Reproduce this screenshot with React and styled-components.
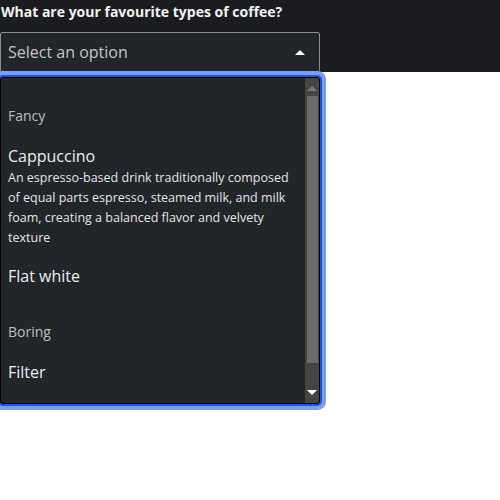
import React from 'react';
import styled, { createGlobalStyle } from 'styled-components';

const GlobalStyle = createGlobalStyle`
  html, body {
    margin: 0;
    padding: 0;
    background: #ffffff;
  }
  body {
    font-family: "Open Sans", "Noto Sans", sans-serif;
  }
  #root {
    min-height: 100vh;
  }
`;

const groups = [
  {
    label: 'Fancy',
    options: [
      {
        title: 'Cappuccino',
        description:
          'An espresso-based drink traditionally composed of equal parts espresso, steamed milk, and milk foam, creating a balanced flavor and velvety texture',
      },
      { title: 'Flat white' },
    ],
  },
  {
    label: 'Boring',
    options: [{ title: 'Filter' }],
  },
];

const App = () => {
  return (
    <Page>
      <GlobalStyle />
      <Header>
        <Label>What are your favourite types of coffee?</Label>
        <Field>
          <Trigger>
            <Placeholder>Select an option</Placeholder>
            <Caret />
          </Trigger>
          <Listbox>
            <Options>
              {groups.map(group => (
                <React.Fragment key={group.label}>
                  <GroupLabel>{group.label}</GroupLabel>
                  {group.options.map(option => (
                    <Option key={option.title}>
                      <OptionTitle>{option.title}</OptionTitle>
                      {option.description && (
                        <OptionText>{option.description}</OptionText>
                      )}
                    </Option>
                  ))}
                </React.Fragment>
              ))}
            </Options>
            <Scrollbar>
              <ScrollArrow $dim />
              <Thumb />
              <ScrollArrow $down />
            </Scrollbar>
          </Listbox>
        </Field>
      </Header>
    </Page>
  );
};

const Page = styled.div`
  min-height: 500px;
  background: #ffffff;
`;

const Header = styled.div`
  background: #1b1c1f;
  display: flex;
  flex-direction: column;
  gap: 8px;
`;

const Label = styled.div`
  color: #f2f2f2;
  font-size: 14px;
  font-weight: 700;
  line-height: 24px;
  padding-left: 1px;
`;

const Field = styled.div`
  position: relative;
  width: 320px;
`;

const Trigger = styled.div`
  box-sizing: border-box;
  height: 40px;
  display: flex;
  align-items: center;
  justify-content: space-between;
  padding: 0 14px 0 7px;
  background: #222529;
  border: 1px solid #8c8d90;
  border-radius: 2px;
`;

const Placeholder = styled.span`
  color: #c4c4c4;
  font-size: 16px;
`;

const Caret = styled.span`
  width: 0;
  height: 0;
  border-left: 5px solid transparent;
  border-right: 5px solid transparent;
  border-bottom: 5px solid #ffffff;
`;

const Listbox = styled.div`
  position: absolute;
  z-index: 10;
  top: 45px;
  left: 0;
  box-sizing: border-box;
  width: 320px;
  height: 327px;
  display: flex;
  background: #222529;
  border: 1px solid #000000;
  border-radius: 3px;
  box-shadow: 0 0 0 2px #1a55e6, 0 0 0 6px #7e9de9;
  overflow: hidden;
`;

const Options = styled.div`
  flex: 1;
  padding-top: 2px;
  overflow: hidden;
`;

const GroupLabel = styled.div`
  padding: 26px 7px 10px;
  color: #bdbdbd;
  font-size: 14px;
  line-height: 20px;
`;

const Option = styled.div`
  padding: 8px 7px;
`;

const OptionTitle = styled.div`
  color: #ededed;
  font-size: 16px;
  line-height: 24px;
`;

const OptionText = styled.div`
  color: #e4e4e4;
  font-size: 12.5px;
  line-height: 20px;
`;

const Scrollbar = styled.div`
  width: 14px;
  display: flex;
  flex-direction: column;
  align-items: center;
  background: #444444;
  padding: 6px 0;
`;

const ScrollArrow = styled.span`
  width: 0;
  height: 0;
  margin: 2px 0;
  border-left: 5px solid transparent;
  border-right: 5px solid transparent;
  ${props =>
    props.$down
      ? 'border-top: 5px solid #ffffff;'
      : `border-bottom: 5px solid ${props.$dim ? '#7a7a7a' : '#ffffff'};`}
`;

const Thumb = styled.div`
  width: 11px;
  height: 267px;
  margin: 3px 0 auto;
  background: #6b6b6b;
`;

export default App;
